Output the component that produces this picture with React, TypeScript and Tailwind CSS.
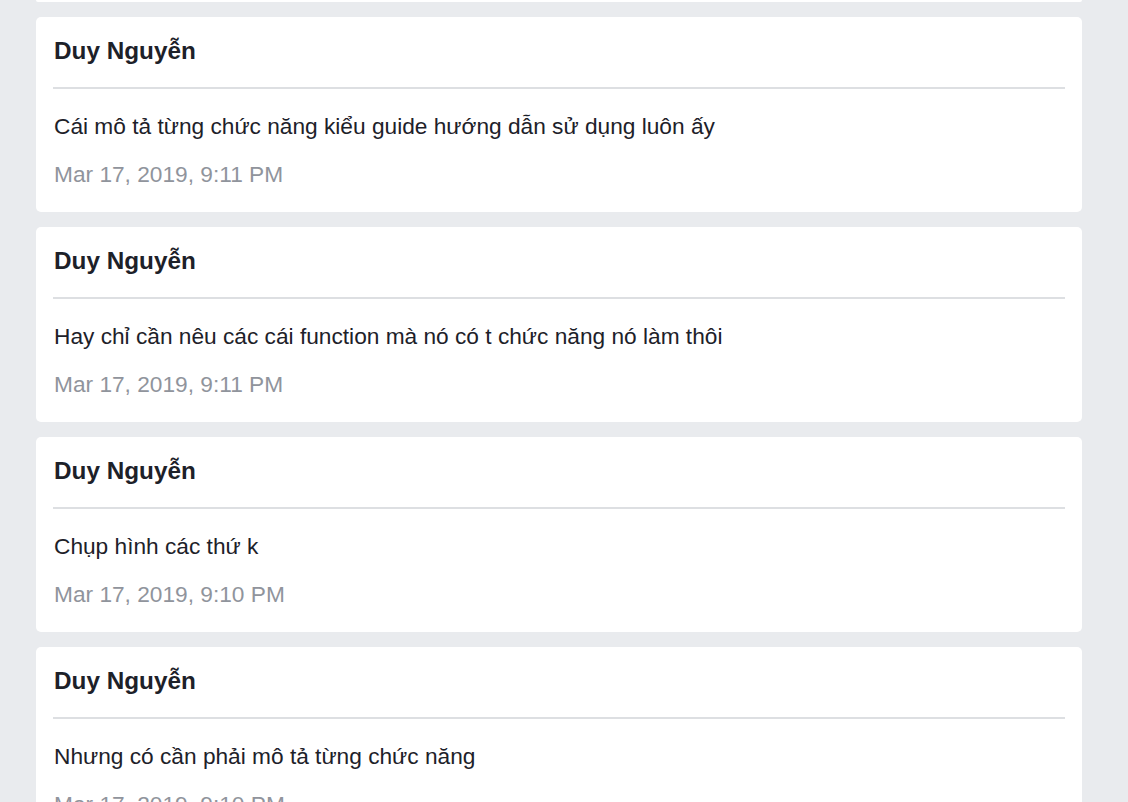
import React from "react";

type Message = {
    author: string;
    text: string;
    time: string;
};

const messages: Message[] = [
    { author: "Duy Nguyễn", text: "Cái mô tả từng chức năng kiểu guide hướng dẫn sử dụng luôn ấy", time: "Mar 17, 2019, 9:11 PM" },
    { author: "Duy Nguyễn", text: "Hay chỉ cần nêu các cái function mà nó có t chức năng nó làm thôi", time: "Mar 17, 2019, 9:11 PM" },
    { author: "Duy Nguyễn", text: "Chụp hình các thứ k", time: "Mar 17, 2019, 9:10 PM" },
    { author: "Duy Nguyễn", text: "Nhưng có cần phải mô tả từng chức năng", time: "Mar 17, 2019, 9:10 PM" },
];

function MessageCard({ data }: { data: Message }) {
    return (
        <div className="bg-white rounded-[5px] px-[18px] pt-[18px] pb-[21px] h-[195px] shrink-0">
            <h2 className="font-bold text-[24.3px] leading-[32px] text-[#1d2129]">
                {data.author}
            </h2>
            <div className="mt-[20px] -mx-px h-[2px] bg-[#dddfe2]"></div>
            <p className="mt-[20px] text-[22.7px] leading-[34px] text-[#1d2129]">
                {data.text}
            </p>
            <span className="block mt-[14px] text-[22.7px] leading-[34px] text-[#90949c]">
                {data.time}
            </span>
        </div>
    );
}

export default function App() {
    const cards = messages.map((m, i) => <MessageCard key={i} data={m} />);

    return (
        <div
            className="w-full h-[802px] overflow-hidden bg-[#e9ebee]"
            style={{ fontFamily: '"Liberation Sans", Arial, sans-serif' }}
        >
            <div className="mx-[36px] w-[1046px] flex flex-col gap-[15px]">
                {/* tail of the previous message, scrolled out of view */}
                <div className="h-[2px] bg-white rounded-b-[5px] shrink-0"></div>
                {cards}
            </div>
        </div>
    );
}
